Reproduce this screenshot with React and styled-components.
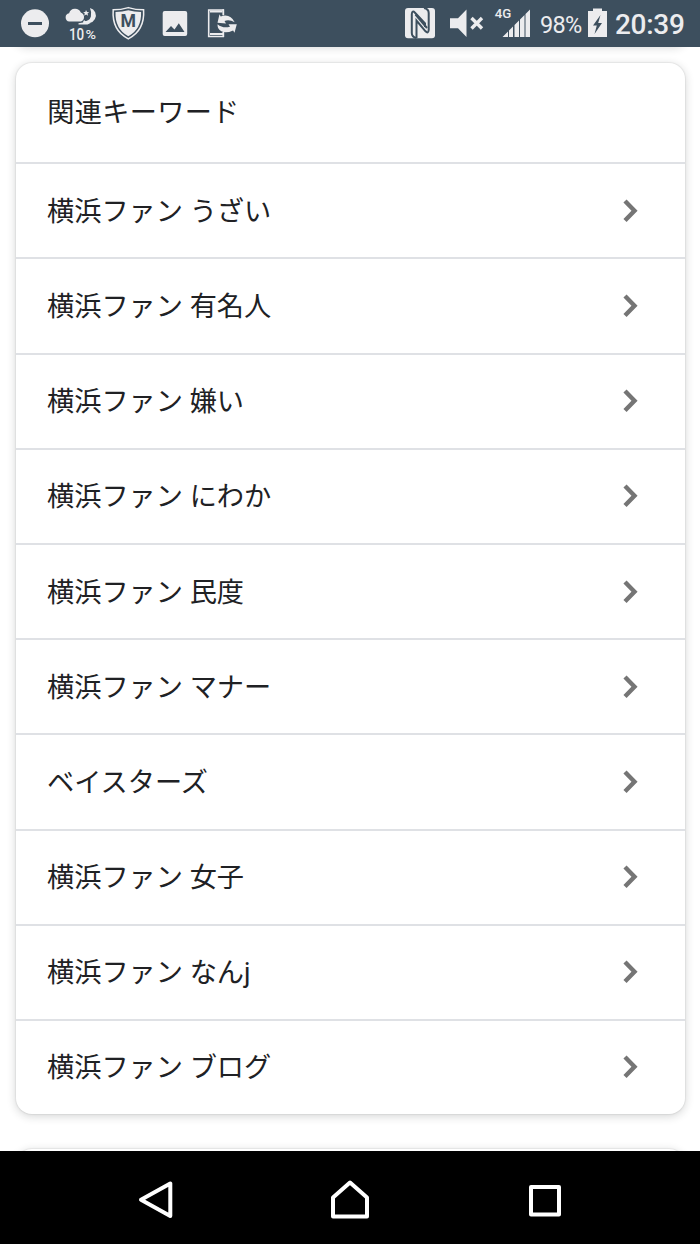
import React from 'react'
import styled, { createGlobalStyle } from 'styled-components'

const keywords = [
  '横浜ファン うざい',
  '横浜ファン 有名人',
  '横浜ファン 嫌い',
  '横浜ファン にわか',
  '横浜ファン 民度',
  '横浜ファン マナー',
  'ベイスターズ',
  '横浜ファン 女子',
  '横浜ファン なんj',
  '横浜ファン ブログ',
]

const DoNotDisturb = () => (
  <Icon $w={28} $ml={21} viewBox='21 0 28 46'>
    <circle cx='35' cy='23.3' r='14' />
    <rect x='28' y='22' width='14' height='3' fill='#3d4f5e' />
  </Icon>
)

const Weather = () => (
  <Icon $w={34} $ml={16} viewBox='65 0 34 46'>
    <path d='M69.3 21.5a4.2 4.2 0 0 1-.2-8.3 6.3 6.3 0 0 1 11.7-.7 4.8 4.8 0 0 1 .2 9z' />
    <path d='M90 8a7.700 7.700 0 1 1-7 13.200q6.500.300 7.900-4.800.900-4.300-.900-8.400z' />
    <path d='M86 10l1 2 2.2.2-1.700 1.400.6 2.200-2-1.200-1.900 1.200.6-2.200-1.700-1.400 2.200-.2z' />
    <path d='M78.500 24.500v-1.300l4.500-.7 1-2.500 2.500 2.200 4.500.5-3.500 1.800z' />
    <text x='69' y='39.5' fontSize='16.5' fontWeight='500' textLength='15.2' lengthAdjust='spacingAndGlyphs'>10</text>
    <text x='85.5' y='39.3' fontSize='12.5' fontWeight='500' textLength='10.5' lengthAdjust='spacingAndGlyphs'>%</text>
  </Icon>
)

const Shield = () => (
  <Icon $w={33} $ml={13} viewBox='112 0 33 46'>
    <path d='M113.2 9.8q7.7 0 15.1-2.2 7.4 2.2 15.3 2.2 1.3 20.7-15.3 29-16.6-8.3-15.1-29z' fill='none' stroke='#ececee' strokeWidth='1.5' />
    <path d='M115.5 12q6.800-.1 12.800-1.800 6 1.700 12.800 1.800.6 17-12.800 24.300-13.400-7.300-12.800-24.300z' />
    <text x='120.500' y='27.300' fontSize='19' fontWeight='700' fill='#3d4f5e' textLength='15.5' lengthAdjust='spacingAndGlyphs'>M</text>
  </Icon>
)

const Picture = () => (
  <Icon $w={26} $ml={17} viewBox='162 0 26 46'>
    <rect x='162.7' y='11' width='24.5' height='25' rx='2' />
    <path d='M165.500 32l5.500-6 3.500 3.500 4.300-6.300 5.700 8.800z' fill='#3d4f5e' />
  </Icon>
)

const PhoneSync = () => (
  <Icon $w={29} $ml={20} viewBox='208 0 29 46'>
    <path d='M224 10H208.700v26.500H224' fill='none' stroke='#ececee' strokeWidth='1.6' />
    <path d='M210 11.500h12.500M210 34h13' stroke='#ececee' strokeWidth='1.8' />
    <path d='M223.300 9.200v6M223.300 32v5' stroke='#ececee' strokeWidth='1.8' />
    <path d='M219.500 14.200l1.200 2.200q9.300-3.400 14 5.800-5.300-3-10.200-1.300l1.500 2.600-8.500-.8z' />
    <path d='M234.500 32.800l-1.400-2.300q-10.500 4.700-15-2.500-.8-1.500-.5-3.800 5 4.500 12.400 2.600l-1.500-2.600h8.300z' />
  </Icon>
)

const Nfc = () => (
  <Icon $w={30} $ml={168} viewBox='405 0 30 46'>
    <rect x='405' y='8' width='30' height='30.3' rx='3' />
    <g fill='none' stroke='#3d4f5e' strokeWidth='2'>
      <path d='M416.500 38q-4.700-1-4.700-5V14q.4-4 3.200-1.300L425 23.500V27' />
      <path d='M424 8q4.700 1 4.700 5v17q-.4 4-3.200 1.300L416.500 20.500V38' />
      <path d='M415.500 14.500L427 28' />
    </g>
  </Icon>
)

const Muted = () => (
  <Icon $w={34} $ml={15} viewBox='450 0 34 46'>
    <path d='M450 18.300h8l8.500-8.700v27.300l-8.500-8.700H450z' />
    <path d='M471.500 18l10.500 10.500M482 18l-10.500 10.500' stroke='#ececee' strokeWidth='3.4' />
  </Icon>
)

const Signal = () => (
  <Icon $w={36} $ml={11} viewBox='495 0 36 46'>
    <text x='494.800' y='18' fontSize='12.5' fontWeight='500' textLength='16.5' lengthAdjust='spacingAndGlyphs'>4G</text>
    <path d='M502.500 37l5.500-5.500V37zM509 30.500l4-4V37h-4zM514.500 25l4.500-4.500V37h-4.500zM520 19.500l4.500-4.500v22H520zM525.500 14l4.500-4.500V37h-4.500z' />
  </Icon>
)

const Battery = () => (
  <Icon $w={19} $ml={6} viewBox='588 0 19 46'>
    <path d='M593 8.500h9V11h5v26h-19V11h5z' />
    <path d='M600.500 15l-7.500 10.500h3.800L594.500 34l7.500-11h-3.800z' fill='#3d4f5e' />
  </Icon>
)

const App = () => {
  return (
    <Screen>
      <GlobalStyle />
      <StatusBar>
        <DoNotDisturb />
        <Weather />
        <Shield />
        <Picture />
        <PhoneSync />
        <Nfc />
        <Muted />
        <Signal />
        <Percent>98%</Percent>
        <Battery />
        <Clock>20:39</Clock>
      </StatusBar>
      <Page>
        <PreviousCard />
        <Card>
          <Title>関連キーワード</Title>
          {keywords.map((keyword) => (
            <Row key={keyword}>
              <span>{keyword}</span>
              <Chevron viewBox='0 0 16 24'>
                <path d='M2 2l9.500 9.700L2 21.500' />
              </Chevron>
            </Row>
          ))}
        </Card>
        <NextCard />
      </Page>
      <NavBar>
        <NavIcon viewBox='0 0 40 42'>
          <path d='M35.300 4.500v32.500L6 20.800z' />
        </NavIcon>
        <NavIcon viewBox='0 0 40 42'>
          <path d='M3 37.500V18.500L20 3.500l17 15v19z' />
        </NavIcon>
        <NavIcon viewBox='0 0 40 42'>
          <rect x='6' y='8' width='28' height='27.5' />
        </NavIcon>
      </NavBar>
    </Screen>
  )
}

const GlobalStyle = createGlobalStyle`
  * {
    box-sizing: border-box;
  }
  body {
    margin: 0;
    background: #fff;
    font-family: Roboto, 'Noto Sans CJK JP', sans-serif;
  }
`

const Screen = styled.div`
  width: 700px;
  height: 1244px;
  display: flex;
  flex-direction: column;
  overflow: hidden;
`

const StatusBar = styled.header`
  flex: none;
  height: 46.5px;
  display: flex;
  align-items: flex-start;
  background: #3d4f5e;
  color: #ececee;
`

const Icon = styled.svg`
  flex: none;
  width: ${(props) => props.$w}px;
  height: 46px;
  margin-left: ${(props) => props.$ml}px;
  fill: #ececee;
  overflow: visible;
`

const Percent = styled.span`
  width: 42px;
  margin-left: 9px;
  font-size: 23.5px;
  line-height: 50px;
  height: 46px;
  letter-spacing: -0.7px;
`

const Clock = styled.span`
  margin-left: 8px;
  font-size: 28px;
  font-weight: 500;
  line-height: 50px;
  height: 46px;
  letter-spacing: -0.3px;
`

const Page = styled.main`
  flex: 1;
  min-height: 0;
  display: flex;
  flex-direction: column;
  padding: 0 15.5px;
  overflow: hidden;
`

const Card = styled.section`
  flex: none;
  margin-top: 16.5px;
  border-radius: 16px;
  background: #fff;
  color: #202124;
  font-size: 27.2px;
  box-shadow: 0 2px 10px rgba(32, 33, 36, 0.2), 0 0 1px 1px rgba(32, 33, 36, 0.06);
`

/* bottom edge of the card that is scrolled away above */
const PreviousCard = styled.div`
  flex: none;
  height: 20px;
  margin: -20px 0 0;
  border-radius: 16px;
  box-shadow: 0 0 10px rgba(32, 33, 36, 0.2);
`

const NextCard = styled.div`
  flex: none;
  height: 60px;
  margin-top: 35px;
  border-radius: 16px;
  background: #fff;
  box-shadow: 0 2px 10px rgba(32, 33, 36, 0.2), 0 0 1px 1px rgba(32, 33, 36, 0.06);
`

const Title = styled.div`
  height: 99.2px;
  padding: 0 31.7px;
  line-height: 100px;
  letter-spacing: 0.3px;
`

const Row = styled.div`
  height: 95.2px;
  display: flex;
  align-items: center;
  justify-content: space-between;
  padding: 0 45.5px 0 31.5px;
  border-top: 2px solid #dfe1e5;
  line-height: 40px;

  span {
    padding-top: 2px;
  }
`

const Chevron = styled.svg`
  width: 16px;
  height: 24px;
  fill: none;
  stroke: #757575;
  stroke-width: 4.4;
`

const NavBar = styled.nav`
  flex: none;
  height: 93.5px;
  display: flex;
  align-items: center;
  gap: 155px;
  padding: 6px 0 0 135px;
  background: #000;
`

const NavIcon = styled.svg`
  width: 40px;
  height: 42px;
  fill: none;
  stroke: #fff;
  stroke-width: 4;
  stroke-linejoin: round;
`

export default App
